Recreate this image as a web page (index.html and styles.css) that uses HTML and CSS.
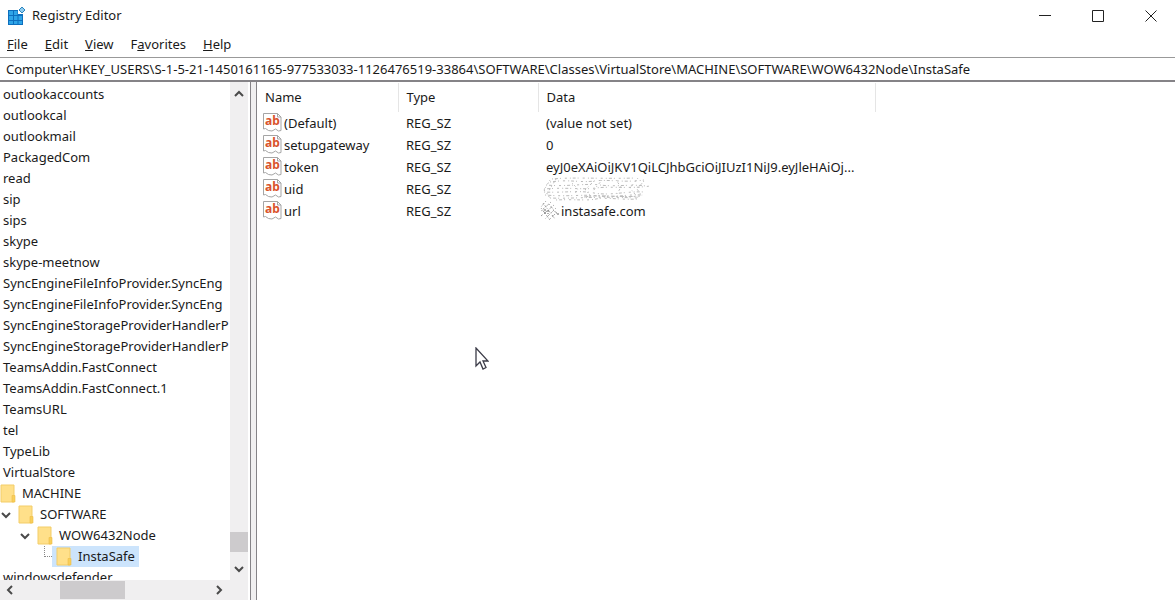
FILE: index.html
```
<!DOCTYPE html>
<html lang="en">
<head>
    <meta charset="UTF-8">
    <title>Registry Editor</title>
    <link rel="stylesheet" href="styles.css">
</head>
<body>
    <svg class="defs" aria-hidden="true">
        <symbol id="folder" viewBox="0 0 16 19">
            <path d="M1 1h13v17H1z" fill="#ffe08a"/>
            <path d="M1 1h13v17H1z" fill="none" stroke="#f3cd68"/>
            <path d="M12 11.500h3v6.500h-3z" fill="#f8cf5c" stroke="#efbd45" stroke-width=".6"/>
        </symbol>
        <symbol id="chevron" viewBox="0 0 12 12">
            <path d="M2 4l4 4 4-4" fill="none" stroke="#4a4a4a" stroke-width="2"/>
        </symbol>
        <symbol id="string-value" viewBox="0 0 19 19">
            <path d="M.5.500h14l3.500 3.500V17.500l-2.500.500-3-2-3.500 2-3.500-.500-3-2-2 .500z" fill="#fff" stroke="#a5a5a5"/>
            <path d="M14.500.500V4H18" fill="none" stroke="#a5a5a5"/>
        </symbol>
    </svg>

    <div class="window">
        <header class="titlebar">
            <svg class="app-icon" viewBox="0 0 20 20" aria-hidden="true">
                <path d="M2 4h10v4h5v11H2z" fill="#0d6fbe"/>
                <path d="M3 5h4v4H3zM8 5h3.500v4H8zM3 10h4v4H3zM8 10h3.500v4H8zM12.500 10H16v4h-3.500zM3 15h4v3H3zM8 15h3.500v3H8zM12.500 15H16v3h-3.500z" fill="#2ea5e8"/>
                <path d="M16 1l3 3-3 3-3-3z" fill="#8fcbee" stroke="#2a86c0"/>
            </svg>
            <h1>Registry Editor</h1>
            <div class="controls">
                <button type="button" aria-label="Minimize"><svg viewBox="0 0 12 12"><path d="M0 5.500h12"/></svg></button>
                <button type="button" aria-label="Maximize"><svg viewBox="0 0 12 12"><path d="M.5.5h11v11H.5z"/></svg></button>
                <button type="button" aria-label="Close"><svg viewBox="0 0 12 12"><path d="M.5.5l11 11M11.500.5l-11 11"/></svg></button>
            </div>
        </header>

        <nav class="menu">
            <button type="button"><u>F</u>ile</button>
            <button type="button"><u>E</u>dit</button>
            <button type="button"><u>V</u>iew</button>
            <button type="button">F<u>a</u>vorites</button>
            <button type="button"><u>H</u>elp</button>
        </nav>

        <input class="address" type="text" aria-label="Address" value="Computer\HKEY_USERS\S-1-5-21-1450161165-977533033-1126476519-33864\SOFTWARE\Classes\VirtualStore\MACHINE\SOFTWARE\WOW6432Node\InstaSafe">

        <main class="panes">
            <section class="tree-pane">
                <ul class="tree">
                    <li>outlookaccounts</li>
                    <li>outlookcal</li>
                    <li>outlookmail</li>
                    <li>PackagedCom</li>
                    <li>read</li>
                    <li>sip</li>
                    <li>sips</li>
                    <li>skype</li>
                    <li>skype-meetnow</li>
                    <li>SyncEngineFileInfoProvider.SyncEng</li>
                    <li>SyncEngineFileInfoProvider.SyncEng</li>
                    <li>SyncEngineStorageProviderHandlerP</li>
                    <li>SyncEngineStorageProviderHandlerP</li>
                    <li>TeamsAddin.FastConnect</li>
                    <li>TeamsAddin.FastConnect.1</li>
                    <li>TeamsURL</li>
                    <li>tel</li>
                    <li>TypeLib</li>
                    <li>VirtualStore</li>
                    <li class="node level-1"><span class="key"><svg class="folder"><use href="#folder"/></svg>MACHINE</span></li>
                    <li class="node level-2"><svg class="twist"><use href="#chevron"/></svg><span class="key"><svg class="folder"><use href="#folder"/></svg>SOFTWARE</span></li>
                    <li class="node level-3"><svg class="twist"><use href="#chevron"/></svg><span class="key"><svg class="folder"><use href="#folder"/></svg>WOW6432Node</span></li>
                    <li class="node level-4"><span class="branch"></span><span class="key selected"><svg class="folder"><use href="#folder"/></svg>InstaSafe</span></li>
                    <li>windowsdefender</li>
                </ul>
                <div class="vbar">
                    <svg class="arrow up"><use href="#chevron"/></svg>
                    <span class="thumb"></span>
                    <svg class="arrow"><use href="#chevron"/></svg>
                </div>
                <div class="hbar">
                    <svg class="arrow left"><use href="#chevron"/></svg>
                    <span class="thumb"></span>
                    <svg class="arrow right"><use href="#chevron"/></svg>
                </div>
            </section>
            <div class="splitter"></div>
            <section class="values">
                <table>
                    <thead>
                        <tr><th class="name">Name</th><th class="type">Type</th><th class="data">Data</th><th></th></tr>
                    </thead>
                    <tbody>
                        <tr><td><div class="value"><span class="value-icon"><svg><use href="#string-value"/></svg><b>ab</b></span>(Default)</div></td><td>REG_SZ</td><td>(value not set)</td></tr>
                        <tr><td><div class="value"><span class="value-icon"><svg><use href="#string-value"/></svg><b>ab</b></span>setupgateway</div></td><td>REG_SZ</td><td>0</td></tr>
                        <tr><td><div class="value"><span class="value-icon"><svg><use href="#string-value"/></svg><b>ab</b></span>token</div></td><td>REG_SZ</td><td>eyJ0eXAiOiJKV1QiLCJhbGciOiJIUzI1NiJ9.eyJleHAiOj...</td></tr>
                        <tr>
                            <td><div class="value"><span class="value-icon"><svg><use href="#string-value"/></svg><b>ab</b></span>uid</div></td>
                            <td>REG_SZ</td>
                            <td class="erased">
                                <svg class="scribble" viewBox="0 0 110 26" aria-hidden="true">
                                    <path d="M10 3C30 1 60 3 94 2M8 6c20-3 30 1 44-1s30 2 50-1M4 9c20 2 40-2 54 0s30-1 46 1M2 13c24-2 38 1 52-1s34 1 54-2M2 16c20 1 34-2 50 1s32-2 50-1M3 19c24 2 40-1 54 1s28-2 44-1M8 22c24 1 40-2 88 0M14 24c20-1 30 1 40-1s24 1 42 0" stroke-dasharray="1 2 3 2 1 4 2 3"/>
                                    <path d="M8 4L2 14l6 8M14 3L5 18M30 7l6 6-4 6M52 5l-9 9 7 7M60 4l-9 11M74 4l5 7-4 7M96 2l-8 10 8 10M102 5l-7 8 5 7" stroke-dasharray="1 2 2 3"/>
                                    <path d="M42 21c20-3 34 1 56-1" stroke-dasharray="4 1 2 2"/>
                                </svg>
                            </td>
                        </tr>
                        <tr>
                            <td><div class="value"><span class="value-icon"><svg><use href="#string-value"/></svg><b>ab</b></span>url</div></td>
                            <td>REG_SZ</td>
                            <td class="erased host">
                                <svg class="scribble small" viewBox="0 0 20 22" aria-hidden="true">
                                    <path d="M7 1L2 7M12 2L1 12M15 5L2 16M17 8L6 19M18 12l-8 8M4 3l12 16M2 8l9 12M10 4l8 10" stroke-dasharray="1 2 2 1"/>
                                    <path d="M6 9v5M9 10v4M18 14h2" stroke="#666" stroke-dasharray="2 1"/>
                                </svg>
                                instasafe.com
                            </td>
                        </tr>
                    </tbody>
                </table>
                <svg class="pointer" viewBox="0 0 14 24" aria-hidden="true">
                    <path d="M1 1v18l4-4 3 7 3-1.500-3-6.500h5z" fill="#fff" stroke="#3c3c48" stroke-width="1.300"/>
                </svg>
            </section>
        </main>
    </div>
</body>
</html>
```
FILE: styles.css
```
* { box-sizing: border-box; }
body {
    margin: 0;
    background: #fff;
    color: #1a1a1a;
    font: 13px/21px "Noto Sans", "Open Sans", sans-serif;
}
.defs { display: none; }
.window { display: flex; flex-direction: column; height: 100vh; }
button { border: 0; padding: 0; background: none; color: inherit; font: inherit; }

.titlebar { display: flex; align-items: center; height: 31px; padding: 0 18px 0 6px; }
.app-icon { width: 20px; height: 20px; margin-right: 6px; }
h1 { margin: 0; font-size: 13px; font-weight: normal; }
.controls { display: flex; gap: 41px; margin-left: auto; }
.controls button { display: flex; align-items: center; width: 12px; height: 28px; }
.controls svg { width: 12px; height: 12px; fill: none; stroke: #222; }

.menu { display: flex; gap: 17px; height: 26px; padding-left: 7px; align-items: center; }

.address {
    width: 100%;
    height: 25px;
    padding: 0 6px;
    border: 0;
    border-top: 1px solid #999;
    border-bottom: 2px solid #858387;
    color: inherit;
    font: inherit;
}

.panes { display: flex; flex: 1; min-height: 0; }
.tree-pane {
    display: grid;
    grid-template: minmax(0, 1fr) 20px / minmax(0, 1fr) 18px;
    width: 251px;
    padding-right: 2px;
    border-right: 1px solid #858387;
}
.tree { margin: 0; padding: 2px 0 0; list-style: none; overflow: hidden; }
.tree li { height: 21px; padding-left: 3px; white-space: nowrap; }
.tree .node { display: flex; }
.level-1 .key { margin-left: -7px; }
.tree .level-2 { padding-left: 0; }
.tree .level-3 { padding-left: 19px; }
.tree .level-4 { padding-left: 38px; }
.key { display: flex; align-items: center; gap: 6px; padding: 0 4px; }
.selected { background: #cce4fc; }
.folder { width: 16px; height: 19px; }
.twist { width: 12px; height: 12px; margin: 5px 2px 0 0; }
.branch { width: 8px; height: 11px; margin: 0 0 0 6px; border-left: 1px dotted #888; border-bottom: 1px dotted #888; }

.vbar, .hbar { display: flex; align-items: center; background: #f0eff0; }
.vbar { flex-direction: column; padding: 6px 0 5px; }
.vbar .thumb { width: 18px; height: 20px; margin: auto 0 11px; }
.hbar { grid-column: 1 / 3; padding: 0 23px 0 4px; }
.hbar .thumb { width: 65px; height: 18px; margin: 0 auto 0 44px; }
.thumb { background: #cdcbcd; }
.arrow { width: 12px; height: 12px; }
.up { transform: rotate(180deg); }
.left { transform: rotate(90deg); }
.right { transform: rotate(-90deg); }

.splitter { width: 6px; background: #f0eff0; border-right: 1px solid #858387; }
.values { position: relative; flex: 1; min-width: 0; padding-top: 1px; overflow: hidden; }
table { width: 100%; border-collapse: collapse; table-layout: fixed; }
th { height: 29px; padding: 0 8px; border-right: 1px solid #e5e5e5; font-weight: normal; text-align: left; }
th:last-child { border: 0; }
.name { width: 141px; }
.type { width: 140px; }
.data { width: 337px; }
td { height: 22px; padding: 0 8px; white-space: nowrap; }
td:first-child { padding-left: 6px; }
.value { display: flex; gap: 2px; }
.value-icon { position: relative; width: 19px; height: 19px; }
.value-icon svg { display: block; width: 19px; height: 19px; }
.value-icon b { position: absolute; top: 0; left: 2px; color: #d9532c; font-size: 12px; line-height: 16px; }

/* wiped out values */
.erased { position: relative; }
td.host { padding-left: 23px; }
.scribble { position: absolute; top: -2px; left: 4px; width: 110px; height: 26px; fill: none; stroke: #bbb; stroke-width: 1; }
.small { top: 0; left: 1px; width: 20px; height: 22px; stroke: #999; }

.pointer { position: absolute; top: 265px; left: 218px; width: 14px; height: 24px; }
```
